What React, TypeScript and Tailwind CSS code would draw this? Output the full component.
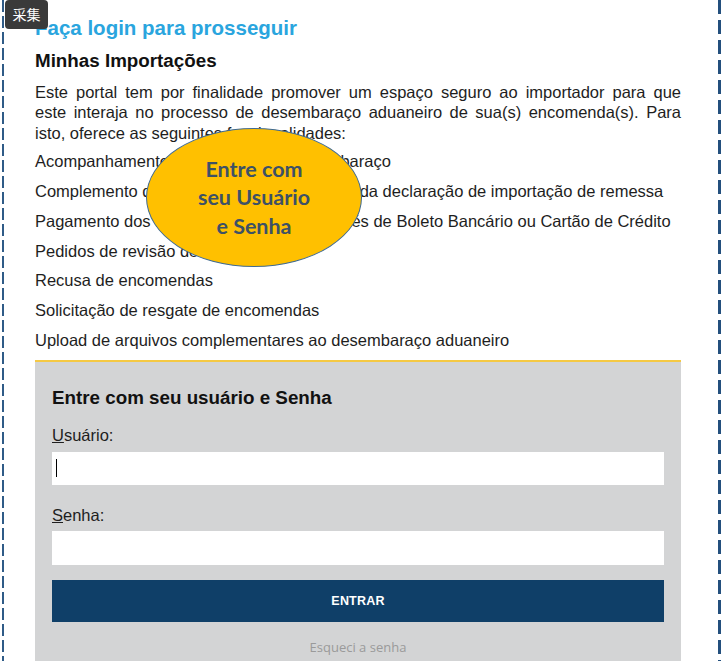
import React from "react";

const FEATURES = [
  "Acompanhamento dos trâmites do desembaraço",
  "Complemento de informação e documentos da declaração de importação de remessa",
  "Pagamento dos impostos e despesas através de Boleto Bancário ou Cartão de Crédito",
  "Pedidos de revisão de tributos",
  "Recusa de encomendas",
  "Solicitação de resgate de encomendas",
  "Upload de arquivos complementares ao desembaraço aduaneiro",
];

export default function App() {
  return (
    <div className="relative flex w-[721px] h-[661px] overflow-hidden bg-white font-['Liberation_Sans',Arial,sans-serif] text-[#1e1e1e]">
      {/* dashed frame, left */}
      <div className="ml-[2px] w-[2px] h-full bg-[repeating-linear-gradient(to_bottom,#2f5b87_0px,#2f5b87_12px,transparent_12px,transparent_16px)]" />

      <main className="flex-1 pl-[31px] pr-[37px]">
        <h1 className="pt-[16px] text-[20.5px] leading-[24px] font-bold text-[#2aa5de]">
          Faça login para prosseguir
        </h1>
        <h2 className="mt-[9.5px] text-[18.8px] leading-[22px] font-bold text-[#111]">
          Minhas Importações
        </h2>
        <p className="mt-[10.3px] text-[16.5px] leading-[20.5px]">
          <span className="block text-justify [text-align-last:justify]">
            Este portal tem por finalidade promover um espaço seguro ao importador para que
          </span>
          <span className="block text-justify [text-align-last:justify]">
            este interaja no processo de desembaraço aduaneiro de sua(s) encomenda(s). Para
          </span>
          <span className="block">isto, oferece as seguintes funcionalidades:</span>
        </p>
        <ul className="mt-[4px]">
          {FEATURES.map((f) => (
            <li key={f} className="text-[16.5px] leading-[29.8px] whitespace-nowrap">
              {f}
            </li>
          ))}
        </ul>

        {/* login box */}
        <section className="mt-[4px] border-t-2 border-[#f5c944] bg-[#d3d4d5] px-[17px] pt-[25px] pb-[20px]">
          <h3 className="text-[18.8px] leading-[22px] font-bold text-[#111]">
            Entre com seu usuário e Senha
          </h3>
          <label className="mt-[16.5px] block text-[16.5px] leading-[20.5px]">
            <span className="underline">U</span>suário:
          </label>
          <div className="mt-[6px] flex h-[33px] items-center bg-white pl-[4px]">
            <span className="h-[18px] w-px bg-black" />
          </div>
          <label className="mt-[20px] block text-[16.5px] leading-[20.5px]">
            <span className="underline">S</span>enha:
          </label>
          <div className="mt-[6px] h-[34px] bg-white" />
          <button className="mt-[15px] flex h-[42px] w-full items-center justify-center bg-[#0f3f68] text-[12.5px] font-bold tracking-[0.2px] text-white">
            ENTRAR
          </button>
          <div className="mt-[15px] text-center text-[13px] leading-[20px] text-[#9a9a9a] font-['Open_Sans',sans-serif]">
            Esqueci a senha
          </div>
        </section>
      </main>

      {/* dashed frame, right */}
      <div className="w-[3px] h-full bg-[repeating-linear-gradient(to_bottom,#234f7d_0px,#234f7d_14px,transparent_14px,transparent_20px)]" />

      {/* callout bubble */}
      <div className="absolute left-[146px] top-[128px] flex h-[139px] w-[216px] items-center justify-center rounded-[50%] border-[1.5px] border-[#3f6a92] bg-[#ffc000]">
        <p className="text-center text-[21.5px] leading-[28.5px] font-bold text-[#3d5166] font-['Lato',sans-serif]">
          Entre com
          <br />
          seu Usuário
          <br />e Senha
        </p>
      </div>

      {/* capture badge */}
      <div className="absolute left-[5px] top-0 flex h-[29px] w-[43px] items-center justify-center rounded-[4px] bg-[#3a3a3a] text-[14px] text-white font-['Noto_Sans_CJK_SC',sans-serif]">
        采集
      </div>
    </div>
  );
}
